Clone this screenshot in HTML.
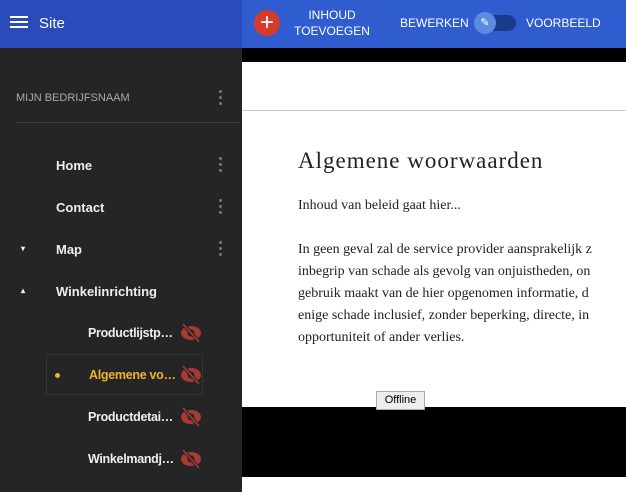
<!DOCTYPE html><html><head><style>
*{margin:0;padding:0;box-sizing:border-box}
html,body{width:626px;height:492px;overflow:hidden}
body{position:relative;font-family:"Liberation Sans",sans-serif;background:#fff}
.sh{position:absolute;left:0;top:0;width:242px;height:48px;background:#2a4cba}
.mh{position:absolute;left:242px;top:0;width:384px;height:48px;background:#2f5dcf}
.side{position:absolute;left:0;top:48px;width:242px;height:444px;background:#252525}
.t{position:absolute;color:#eee;font-size:13px;font-weight:bold}
.s{letter-spacing:-0.3px;font-size:12.5px}
.dots{position:absolute;width:4px}
.dots i{display:block;width:3px;height:3px;border-radius:50%;background:#777;margin-bottom:3px}
.c{position:absolute;font-family:"Liberation Serif",serif;color:#222}
</style></head><body>
<div class="sh"></div><div class="mh"></div>
<div style="position:absolute;left:10px;top:16px;width:18px;height:2px;background:#fff;box-shadow:0 5px 0 #fff,0 10px 0 #fff"></div>
<div class="t" style="left:39px;top:15px;font-weight:normal;font-size:15px;color:#fff">Site</div>
<div style="position:absolute;left:254px;top:10px;width:26px;height:26px;border-radius:50%;background:#d63a2a;color:#fff;font-size:24px;line-height:25px;text-align:center">+</div>
<div class="t" style="left:290px;top:7px;width:84px;text-align:center;font-size:12px;line-height:16px;font-weight:normal;color:#fff">INHOUD<br>TOEVOEGEN</div>
<div class="t" style="left:400px;top:16px;font-size:12px;font-weight:normal;color:#fff">BEWERKEN</div>
<div style="position:absolute;left:478px;top:15px;width:38px;height:16px;border-radius:8px;background:#1c3a8a"></div>
<div style="position:absolute;left:474px;top:12px;width:22px;height:22px;border-radius:50%;background:#5b8be0;color:#fff;font-size:11px;text-align:center;line-height:22px">✎</div>
<div class="t" style="left:526px;top:16px;font-size:12px;font-weight:normal;color:#fff">VOORBEELD</div>
<div class="side"></div>
<div class="t" style="left:16px;top:92px;font-size:11px;color:#aaa;font-weight:normal">MIJN BEDRIJFSNAAM</div>
<div class="dots" style="left:219px;top:90px"><i></i><i></i><i></i></div>
<div style="position:absolute;left:16px;top:122px;width:224px;height:1px;background:#3a3a3a"></div>
<div class="t" style="left:56px;top:158px">Home</div><div class="dots" style="left:219px;top:157px"><i></i><i></i><i></i></div>
<div class="t" style="left:56px;top:200px">Contact</div><div class="dots" style="left:219px;top:199px"><i></i><i></i><i></i></div>
<div class="t" style="left:56px;top:242px">Map</div><div class="dots" style="left:219px;top:241px"><i></i><i></i><i></i></div>
<div class="t" style="left:21px;top:244px;font-size:8px">▾</div>
<div class="t" style="left:21px;top:286px;font-size:8px">▴</div>
<div class="t" style="left:56px;top:284px">Winkelinrichting</div>
<div style="position:absolute;left:46px;top:354px;width:157px;height:41px;border:1px dotted #444"></div>
<div style="position:absolute;left:55px;top:373px;width:5px;height:5px;border-radius:50%;background:#f0b030"></div>
<div class="t s" style="left:88px;top:326px">Productlijstp…</div>
<div class="t s" style="left:89px;top:368px;color:#f0b030">Algemene vo…</div>
<div class="t s" style="left:88px;top:410px">Productdetai…</div>
<div class="t s" style="left:88px;top:452px">Winkelmandj…</div>
<svg style="position:absolute;left:180px;top:323px" width="22" height="150" viewBox="0 0 22 150">
<g id="e"><ellipse cx="11" cy="10" rx="10" ry="7" fill="#a83a34"/><circle cx="11" cy="10" r="3.5" fill="#252525"/><path d="M3 1 L19 19" stroke="#252525" stroke-width="3.5"/><path d="M3 1 L19 19" stroke="#a83a34" stroke-width="1.6"/></g>
<use href="#e" y="42"/><use href="#e" y="84"/><use href="#e" y="126"/></svg>
<div style="position:absolute;left:242px;top:48px;width:384px;height:14px;background:#000"></div>
<div style="position:absolute;left:242px;top:110px;width:384px;height:1px;background:#ccc"></div>
<div class="c" style="left:298px;top:148px;font-size:23px;letter-spacing:1px;white-space:nowrap">Algemene woorwaarden</div>
<div class="c" style="left:298px;top:198px;font-size:14px">Inhoud van beleid gaat hier...</div>
<div class="c" style="left:298px;top:239px;font-size:14px;line-height:22px;white-space:nowrap">In geen geval zal de service provider aansprakelijk z<br>inbegrip van schade als gevolg van onjuistheden, on<br>gebruik maakt van de hier opgenomen informatie, d<br>enige schade inclusief, zonder beperking, directe, in<br>opportuniteit of ander verlies.</div>
<div style="position:absolute;left:242px;top:407px;width:384px;height:70px;background:#000"></div>
<div style="position:absolute;left:376px;top:391px;width:49px;height:19px;background:#eee;border:1px solid #aaa;font-size:11px;text-align:center;line-height:17px;color:#000">Offline</div>
</body></html>
